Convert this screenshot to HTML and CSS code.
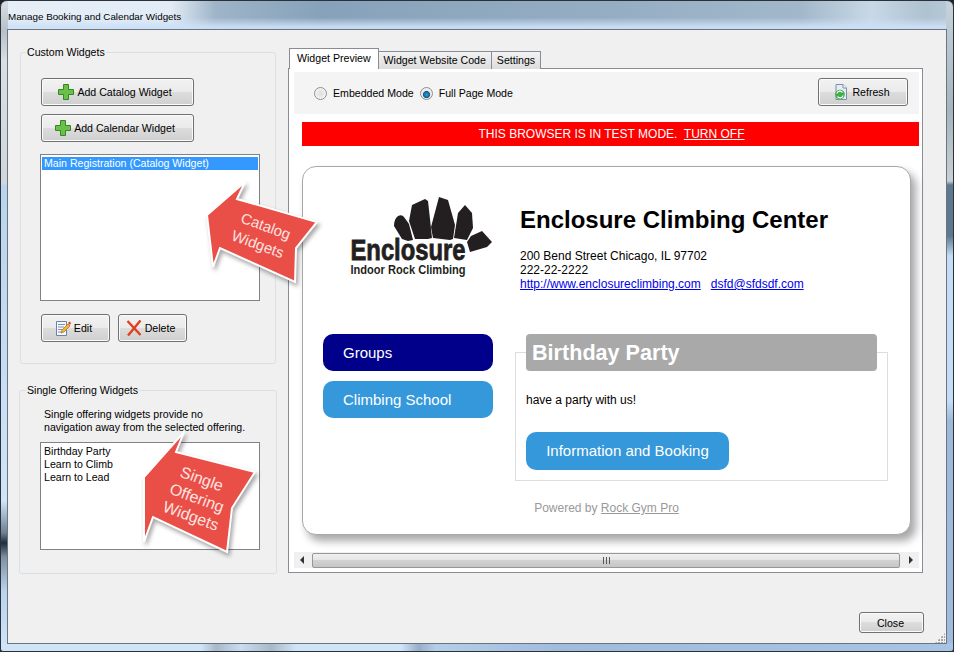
FILE: index.html
```html
<!DOCTYPE html>
<html lang="en">
<head>
    <meta charset="UTF-8">
    <title>Manage Booking and Calendar Widgets</title>
    <link rel="stylesheet" href="styles.css">
</head>
<body>
    <div class="window">
        <div class="title">Manage Booking and Calendar Widgets</div>
        <div class="client">
            <div class="columns">
                <div class="left-col">
                    <fieldset class="group group-custom">
                        <legend>Custom Widgets</legend>
                        <div class="btn-stack">
                            <button class="btn btn-wide">
                                <svg class="ico" viewBox="0 0 16 16"><path d="M5.500 .5h5v5h5v5h-5v5h-5v-5h-5v-5h5z" fill="#6cc04a" stroke="#2f8a22"/></svg>
                                Add Catalog Widget
                            </button>
                            <button class="btn btn-wide">
                                <svg class="ico" viewBox="0 0 16 16"><path d="M5.500 .5h5v5h5v5h-5v5h-5v-5h-5v-5h5z" fill="#6cc04a" stroke="#2f8a22"/></svg>
                                Add Calendar Widget
                            </button>
                        </div>
                        <div class="listbox listbox-catalog">
                            <div class="list-item selected">Main Registration (Catalog Widget)</div>
                        </div>
                        <div class="btn-row">
                            <button class="btn btn-small btn-edit">
                                <svg class="ico" viewBox="0 0 16 16">
                                    <path d="M1.500 1.500h10v14h-10z" fill="#f4f7fb" stroke="#6d83a6"/>
                                    <path d="M3 4.500h7M3 7h6M3 9.500h4M3 12h3" stroke="#7d93b5"/>
                                    <path d="M6 13l1-3 6-6 2 2-6 6z" fill="#f2b632" stroke="#b5651d" stroke-width=".7"/>
                                    <path d="M13 3l1.500-1.500 1.500 1.500-1 2z" fill="#d9412b"/>
                                </svg>
                                Edit
                            </button>
                            <button class="btn btn-small btn-delete">
                                <svg class="ico" viewBox="0 0 16 16"><path d="M1.500 1l13 14M14.500 .5L2 15.500" stroke="#e0401f" stroke-width="2.400" fill="none"/></svg>
                                Delete
                            </button>
                        </div>
                    </fieldset>
                    <fieldset class="group group-single">
                        <legend>Single Offering Widgets</legend>
                        <p class="group-note">Single offering widgets provide no<br>navigation away from the selected offering.</p>
                        <div class="listbox listbox-single">
                            <div class="list-item">Birthday Party</div>
                            <div class="list-item">Learn to Climb</div>
                            <div class="list-item">Learn to Lead</div>
                        </div>
                    </fieldset>
                </div>

                <div class="right-col">
                    <div class="tabs">
                        <div class="tab active">Widget Preview</div>
                        <div class="tab">Widget Website Code</div>
                        <div class="tab">Settings</div>
                    </div>
                    <div class="panel">
                        <div class="toolbar">
                            <label class="radio"><input type="radio" name="mode"> Embedded Mode</label>
                            <label class="radio"><input type="radio" name="mode" checked> Full Page Mode</label>
                            <button class="btn btn-refresh">
                                <svg class="ico" viewBox="0 0 16 16">
                                    <path d="M3 .5h7l3.500 3.500v11.500H3z" fill="#e6edf6" stroke="#7d8ea8"/>
                                    <path d="M10 .5v3.500h3.500" fill="#fff" stroke="#7d8ea8"/>
                                    <circle cx="7" cy="10.500" r="4.800" fill="#3fae49"/>
                                    <path d="M4 9.500a3 3 0 0 1 5.500-1M10 11.500a3 3 0 0 1-5.500 1" stroke="#fff" stroke-width="1.300" fill="none"/>
                                </svg>
                                Refresh
                            </button>
                        </div>
                        <div class="preview">
                            <div class="test-banner">THIS BROWSER IS IN TEST MODE.&nbsp; <a href="#">TURN OFF</a></div>
                            <div class="card">
                                <div class="card-head">
                                    <svg class="logo" viewBox="0 0 180 100">
                                        <path d="M68 31q4-2 6 1l5 7 4 16-5 1-6-2-8-13q0-7 4-10z"/>
                                        <path d="M82 20l13-6 3 2 2 18 2 19-4 1-13 0-6-18z"/>
                                        <path d="M109 12l9 3 7 25-2 14-3 1-17-2-2-11z"/>
                                        <path d="M135 20l7 8 1 15-6 12-13-2 4-25z"/>
                                        <path d="M152 46l10 11-5 5-17 5-3-10 4-6z"/>
                                        <text class="logo-name" x="20.500" y="75" textLength="115" lengthAdjust="spacingAndGlyphs">Enclosure</text>
                                        <text class="logo-sub" x="20.500" y="89" textLength="115" lengthAdjust="spacingAndGlyphs">Indoor Rock Climbing</text>
                                    </svg>
                                    <div class="gym-info">
                                        <h1>Enclosure Climbing Center</h1>
                                        <p>200 Bend Street Chicago, IL 97702<br>
                                        222-22-2222<br>
                                        <a href="#">http://www.enclosureclimbing.com</a> &nbsp; <a href="#">dsfd@sfdsdf.com</a></p>
                                    </div>
                                </div>
                                <div class="card-body">
                                    <div class="side-nav">
                                        <a class="nav-btn navy" href="#">Groups</a>
                                        <a class="nav-btn" href="#">Climbing School</a>
                                    </div>
                                    <div class="offering">
                                        <h2>Birthday Party</h2>
                                        <p>have a party with us!</p>
                                        <a class="nav-btn info-btn" href="#">Information and Booking</a>
                                    </div>
                                </div>
                                <div class="powered">Powered by <a href="#">Rock Gym Pro</a></div>
                            </div>
                        </div>
                        <div class="hscroll">
                            <span class="arrow-left"></span>
                            <div class="thumb"><span class="grip"></span></div>
                            <span class="arrow-right"></span>
                        </div>
                    </div>
                </div>
            </div>
            <div class="footer">
                <button class="btn btn-close">Close</button>
            </div>
        </div>
        <div class="size-grip"></div>

        <!-- red callouts drawn on top of the dialog -->
        <svg class="callouts" viewBox="0 0 954 652">
            <path class="callout" d="M207 215L245 182 237 199 317 222 296 248 295 282 220 248 213 267z"/>
            <text class="callout-text" transform="translate(264 231) rotate(20)" text-anchor="middle">Catalog</text>
            <text class="callout-text" transform="translate(256 249) rotate(20)" text-anchor="middle">Widgets</text>
            <path class="callout" d="M144 477L184 432 176 452 255 472 232 508 227 552 153 517 144 542z"/>
            <text class="callout-text big" transform="translate(200 484) rotate(20)" text-anchor="middle">Single</text>
            <text class="callout-text big" transform="translate(195 503) rotate(20)" text-anchor="middle">Offering</text>
            <text class="callout-text big" transform="translate(189 521) rotate(20)" text-anchor="middle">Widgets</text>
        </svg>
    </div>
</body>
</html>
```

FILE: styles.css
```css
* {
    box-sizing: border-box;
}
html, body {
    margin: 0;
    padding: 0;
    background: #1c2228;
}
body {
    font-family: "Liberation Sans", Arial, sans-serif;
    font-size: 10.600px;
    color: #000;
}
.window {
    position: relative;
    width: 954px;
    height: 652px;
    padding: 0 7px 7px;
    display: flex;
    flex-direction: column;
    border: 1px solid #2a3138;
    border-radius: 7px 7px 3px 3px;
    /* blurred aero glass: bottom, left, right, top */
    background:
        linear-gradient(90deg, #cfe4f8 0, #cfe4f8 200px, #a8b8c8 215px, #c8dcf2 240px, #a8b8c8 270px, #cfe4f8 295px, #cfe4f8 400px, #98aec8 418px, #b4cdea 435px, #a0bcdc 560px, #a8c4e4 100%) bottom / 100% 8px no-repeat,
        linear-gradient(#d8dfe5 0, #b6c0c8 30px, #d8dfe5 60px, #d0d6dc 183px, #b9d4ee 184px, #cfe4f8 500px, #6d7f92 532px, #1e2c3c 542px, #7d8fa2 556px, #b9d4ee 590px, #cfe4f8 100%) left / 7px 100% no-repeat,
        linear-gradient(#c6d2dc 0, #a6b4bc 110px, #c8d0d4 180px, #5e7890 184px, #5e7890 235px, #c4dcf6 255px, #c4dcf6 400px, #9db8d8 420px, #a0bcdc 100%) right / 7px 100% no-repeat,
        linear-gradient(rgba(205, 224, 246, 0) 55%, rgba(205, 224, 246, 0.9) 85%) top / 100% 30px no-repeat,
        linear-gradient(90deg, #e6eff8 0, #e2ecf6 170px, #9eb4c8 215px, #86a2ba 320px, #96aec4 620px, #a2b8ca 800px, #c8d8e6 870px, #aec2d0 925px, #b8cad6 100%) top / 100% 30px no-repeat,
        #cfe4f8;
    overflow: hidden;
}
.title {
    height: 28px;
    padding: 9px 0 0;
    font-size: 9.800px;
    line-height: 14px;
}
.client {
    flex: 1;
    margin-left: -1px;
    margin-right: -1px;
    border: 1px solid #6b7580;
    background: #f0f0f0;
    padding: 15px 22px 0 11px;
    display: flex;
    flex-direction: column;
}
.columns {
    display: flex;
    gap: 11px;
}
.left-col {
    width: 258px;
}
.right-col {
    width: 635px;
    padding-top: 3px;
}

/* group boxes */
.group {
    margin: 0;
    padding: 0 0 0 20px;
    min-width: 0;
    border: 1px solid #d9e0e5;
    border-radius: 3px;
}
.group legend {
    margin-left: -14px;
    padding: 0 1px;
    line-height: 14px;
}
.group-custom {
    margin: 0 1px;
    padding: 19px 0 21px 19px;
}
.group-single {
    margin-top: 19px;
    padding: 11px 0 23px 20px;
}
.group-note {
    margin: 0 0 8px 4px;
    line-height: 13px;
}
.btn-stack {
    display: flex;
    flex-direction: column;
    gap: 8px;
    padding-left: 1px;
}
.btn-row {
    display: flex;
    gap: 8px;
    margin-top: 13px;
    padding-left: 1px;
}
.listbox {
    width: 220px;
    border: 1px solid #7f8389;
    background: #fff;
    padding: 1px;
    line-height: 13px;
}
.listbox-catalog {
    margin-top: 12px;
    height: 147px;
}
.listbox-single {
    height: 108px;
    padding: 2px;
}
.list-item {
    padding-left: 1px;
}
.list-item.selected {
    background: #3399ff;
    color: #fff;
    height: 13px;
    padding-left: 2px;
    margin-top: 1px;
}

/* win7 style buttons */
.btn {
    display: flex;
    align-items: center;
    justify-content: center;
    gap: 3px;
    height: 28px;
    padding: 0;
    font: inherit;
    color: #000;
    border: 1px solid #707070;
    border-radius: 3px;
    background: linear-gradient(#f2f2f2 0, #ebebeb 48%, #dddddd 50%, #cfcfcf 100%);
    box-shadow: inset 0 0 0 1px #fbfbfb;
}
.ico {
    width: 16px;
    height: 16px;
    flex: none;
}
.btn-wide {
    width: 153px;
    padding-right: 5px;
}
.btn-small {
    width: 69px;
    padding-right: 4px;
}
.btn-refresh {
    width: 90px;
    margin-left: auto;
    margin-bottom: 2px;
    padding-right: 3px;
}
.btn-close {
    width: 65px;
    height: 21px;
    padding-right: 2px;
}
.footer {
    display: flex;
    justify-content: flex-end;
    margin-top: 38px;
}

/* tabs */
.tabs {
    display: flex;
    align-items: flex-end;
    position: relative;
    z-index: 1;
    margin-bottom: -1px;
}
.tab {
    height: 18px;
    padding: 0 5px;
    line-height: 16px;
    border: 1px solid #898c95;
    border-bottom: 0;
    margin-left: -1px;
    background: linear-gradient(#f3f3f3, #dcdcdc);
}
.tab:first-child {
    margin-left: 1px;
}
.tab.active {
    height: 21px;
    padding: 1px 7px 0;
    background: #fff;
    position: relative;
    z-index: 1;
}
.panel {
    height: 505px;
    border: 1px solid #898c95;
    background: #fff;
    padding: 3px 3px 4px 5px;
    display: flex;
    flex-direction: column;
}
.toolbar {
    height: 42px;
    flex: none;
    background: #f4f4f4;
    display: flex;
    align-items: center;
    gap: 6px;
    padding: 0 11px 0 20px;
}
.radio {
    display: flex;
    align-items: center;
    gap: 6px;
}
.radio input {
    appearance: none;
    width: 13px;
    height: 13px;
    margin: 0;
    border: 1px solid #8e8f8f;
    border-radius: 50%;
    background: radial-gradient(circle, #e4e4e4 30%, #f6f6f6 70%);
}
.radio input:checked {
    background: radial-gradient(circle at 50% 60%, #2ea0dc 0, #155a8a 38%, #e8e8e8 45%, #f6f6f6 100%);
}
.preview {
    flex: 1;
    margin: 8px 0 0 8px;
}
.test-banner {
    height: 24px;
    line-height: 24px;
    background: #ff0000;
    color: #fff;
    text-align: center;
    font-size: 12px;
    padding-left: 2px;
}
.test-banner a {
    color: #fff;
}

/* preview card */
.card {
    width: 609px;
    height: 369px;
    margin-top: 20px;
    border: 1px solid #a9a9a9;
    border-radius: 14px;
    background: #fff;
    box-shadow: 5px 6px 8px rgba(0, 0, 0, 0.35);
    font-size: 12px;
}
.card-head {
    display: flex;
    gap: 10px;
    padding: 18px 0 0 27px;
    height: 167px;
}
.logo {
    width: 180px;
    height: 100px;
    flex: none;
    fill: #231f20;
}
.logo-name {
    font: bold 29px "Liberation Sans", Arial, sans-serif;
    stroke: #231f20;
    stroke-width: 0.8;
}
.logo-sub {
    font: bold 12.500px "Liberation Sans", Arial, sans-serif;
}
.gym-info h1 {
    margin: 21px 0 0;
    font-size: 24px;
    line-height: 28px;
}
.gym-info p {
    margin: 15px 0 0;
    line-height: 14px;
}
.gym-info a {
    color: #0000ee;
}
.card-body {
    display: flex;
    gap: 22px;
    padding-left: 20px;
}
.side-nav {
    width: 170px;
    display: flex;
    flex-direction: column;
    gap: 10px;
}
.nav-btn {
    display: block;
    height: 37px;
    padding: 0 20px;
    line-height: 37px;
    border-radius: 10px;
    background: #3498db;
    color: #fff;
    font-size: 15px;
    text-decoration: none;
}
.nav-btn.navy {
    background: #00008b;
}
.offering {
    width: 373px;
    height: 129px;
    margin-top: 18px;
    border: 1px solid #dddddd;
    padding: 0 10px;
}
.offering h2 {
    margin: -19px 0 0;
    height: 37px;
    padding-left: 6px;
    line-height: 37px;
    font-size: 21.600px;
    color: #fff;
    background: #a9a9a9;
    border-radius: 4px;
}
.offering p {
    margin: 22px 0 0;
    line-height: 14px;
}
.info-btn {
    width: 203px;
    height: 38px;
    line-height: 38px;
    margin-top: 25px;
    text-align: center;
    padding: 0;
}
.powered {
    margin-top: 20px;
    text-align: center;
    color: #999;
    line-height: 14px;
}
.powered a {
    color: #999;
}

/* horizontal scrollbar */
.hscroll {
    height: 16px;
    flex: none;
    background: #f0f0f0;
    display: flex;
    align-items: center;
}
.arrow-left, .arrow-right {
    width: 0;
    height: 0;
    border: 4px solid transparent;
    flex: none;
}
.arrow-left {
    border-right-color: #333;
    border-left-width: 0;
    margin: 0 8px 0 6px;
}
.arrow-right {
    border-left-color: #333;
    border-right-width: 0;
    margin: 0 6px 0 9px;
}
.thumb {
    flex: 1;
    height: 15px;
    border: 1px solid #979797;
    border-radius: 2px;
    background: linear-gradient(#f0f0f0 0, #e4e4e4 48%, #d2d2d2 50%, #c6c6c6 100%);
    display: flex;
    align-items: center;
    justify-content: center;
}
.grip {
    width: 7px;
    height: 7px;
    background: repeating-linear-gradient(90deg, #555 0 1px, transparent 1px 3px);
}
.size-grip {
    position: absolute;
    right: 8px;
    bottom: 8px;
    width: 10px;
    height: 10px;
    background:
        radial-gradient(circle at 1px 1px, #a6a6a6 1px, transparent 1px) 0 0 / 3px 3px;
    clip-path: polygon(100% 0, 100% 100%, 0 100%);
}

/* callouts */
.callouts {
    position: absolute;
    left: -1px;
    top: -1px;
    width: 954px;
    height: 652px;
    pointer-events: none;
}
.callout {
    fill: #e94e47;
    stroke: #fff;
    stroke-width: 2;
    stroke-linejoin: miter;
    filter: drop-shadow(2px 3px 2px rgba(0, 0, 0, 0.35));
}
.callout-text {
    font: 15px "Liberation Sans", Arial, sans-serif;
    fill: #ffe3e0;
}
.callout-text.big {
    font-size: 16px;
}
```
